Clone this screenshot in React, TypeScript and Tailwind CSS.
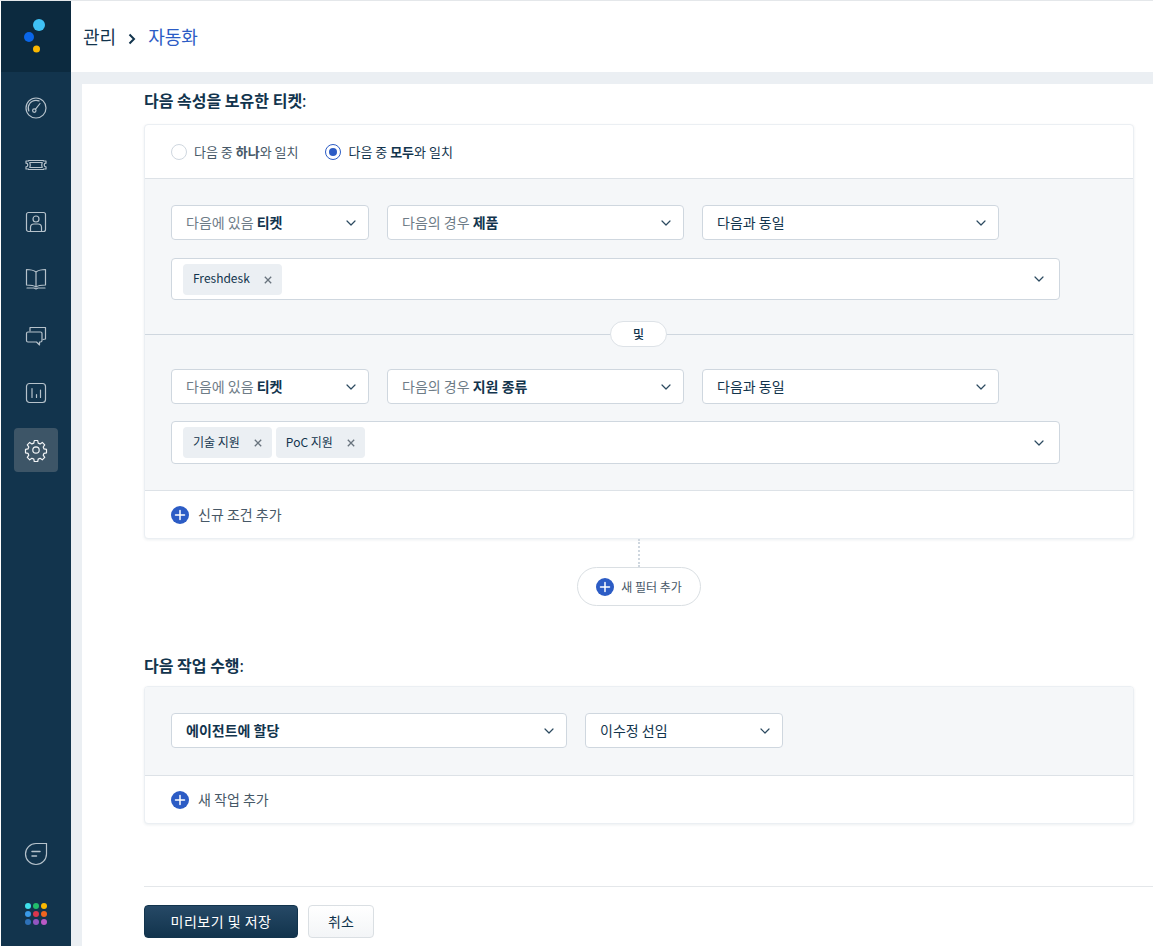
import React from "react";

const Chevron = () => (
  <svg width="10" height="6" viewBox="0 0 10 6" fill="none" className="shrink-0">
    <path d="M1 1l4 4 4-4" stroke="#2c4a60" strokeWidth="1.2" strokeLinecap="round" strokeLinejoin="round" />
  </svg>
);

const Plus = ({ size = 18 }: { size?: number }) => (
  <svg width={size} height={size} viewBox="0 0 18 18" className="shrink-0">
    <circle cx="9" cy="9" r="9" fill="#2c5cc5" />
    <path d="M9 4.5v9M4.5 9h9" stroke="#fff" strokeWidth="1.5" strokeLinecap="round" />
  </svg>
);

const X = () => (
  <svg width="8" height="8" viewBox="0 0 8 8" fill="none" className="shrink-0">
    <path d="M.8.8l6.4 6.4M7.2.8L.8 7.2" stroke="#68737d" strokeWidth="1.3" />
  </svg>
);

function Select({ w, muted, bold, plain }: { w: string; muted?: string; bold?: string; plain?: string }) {
  return (
    <div className={`${w} h-[35px] shrink-0 bg-white border border-[#cfd7df] rounded-[4px] flex items-center justify-between pl-[14px] pr-[12px] text-[14px]`}>
      <span className="whitespace-nowrap">
        {muted && <span className="text-[#6e7c87]">{muted} </span>}
        {bold && <span className="font-bold text-[#12344d]">{bold}</span>}
        {plain && <span className="text-[#12344d]">{plain}</span>}
      </span>
      <Chevron />
    </div>
  );
}

function Tag({ label, gap }: { label: string; gap: string }) {
  return (
    <div className="h-[31px] bg-[#ebeff3] rounded-[4px] pl-[10px] pr-[10px] flex items-center text-[12px] text-[#12344d]">
      <span className="-mt-[2px] whitespace-nowrap">{label}</span>
      <span className={`${gap} mt-[1px]`}><X /></span>
    </div>
  );
}

function TagBox({ children, h }: { children: React.ReactNode; h: string }) {
  return (
    <div className={`w-[889px] ${h} bg-white border border-[#cfd7df] rounded-[4px] flex items-center justify-between pl-[11px] pr-[15px]`}>
      <div className="flex gap-[4px]">{children}</div>
      <Chevron />
    </div>
  );
}

const NavIcon = ({ children, active }: { children: React.ReactNode; active?: boolean }) => (
  <div className={`w-[44px] h-[44px] rounded-[4px] flex items-center justify-center ${active ? "bg-[#3d5567]" : ""}`}>
    <svg width="24" height="24" viewBox="0 0 24 24" fill="none" stroke={active ? "#f2f4f6" : "#b6c2cb"} strokeWidth="1.2" strokeLinecap="round" strokeLinejoin="round">
      {children}
    </svg>
  </div>
);

function Sidebar() {
  return (
    <aside className="w-[70px] shrink-0 ml-[1px] bg-[#12344d] flex flex-col items-center">
      <div className="w-full h-[71px] bg-[#0c2a3f] flex items-center justify-center">
        <svg width="26" height="38" viewBox="0 0 26 38">
          <circle cx="16" cy="7" r="6" fill="#3fc1f5" />
          <circle cx="6" cy="19" r="5" fill="#0a66e8" />
          <circle cx="13.5" cy="31" r="3.5" fill="#fbb800" />
        </svg>
      </div>
      <div className="flex flex-col items-center gap-[13px] mt-[14px]">
        <NavIcon>
          <circle cx="12" cy="12" r="10" />
          <circle cx="12" cy="12" r="7.2" strokeWidth="0.8" opacity="0" />
          <path d="M4.8 15A7.8 7.8 0 0 1 12 4.3a7.8 7.8 0 0 1 3 .6" />
          <circle cx="10.3" cy="14.6" r="1.7" />
          <path d="M11.4 13.3L16 7.5" />
        </NavIcon>
        <NavIcon>
          <path d="M2 8h2.5V7.5a1 1 0 0 0 0 0H19.5V8H22v2.2a1.8 1.8 0 0 0 0 3.6V16h-2.5v.5H4.5V16H2v-2.2a1.8 1.8 0 0 0 0-3.6z" />
          <path d="M4.5 9.5h15v5h-15z" opacity="0" />
          <path d="M5.8 9.5c.6 1.5.6 3.5 0 5M18.2 9.5c-.6 1.5-.6 3.5 0 5M5.8 9.5h12.4M5.8 14.5h12.4" />
        </NavIcon>
        <NavIcon>
          <rect x="2.5" y="2.5" width="19" height="19" rx="2" />
          <circle cx="12" cy="9" r="3" />
          <path d="M6.5 21v-3.5a3.5 3.5 0 0 1 3.5-3.5h4a3.5 3.5 0 0 1 3.5 3.5V21" />
        </NavIcon>
        <NavIcon>
          <path d="M12 5c-2-1.5-5-2.5-9.5-2.5V18c4.5 0 7.5.5 9.5 2 2-1.5 5-2 9.500-2V2.500C17 2.500 14 3.500 12 5zM12 5v15" />
          <path d="M3 21h7l2 1 2-1h7" />
        </NavIcon>
        <NavIcon>
          <path d="M6 7V3.500h15.500V15l-2.500.5" />
          <path d="M4 8h12.500a1.500 1.500 0 0 1 1.500 1.500v7a1.500 1.500 0 0 1-1.500 1.500H15.500v3l-3-3H4a1.500 1.500 0 0 1-1.500-1.500v-7A1.500 1.500 0 0 1 4 8z" />
        </NavIcon>
        <NavIcon>
          <rect x="2.500" y="2.500" width="19" height="19" rx="3" />
          <path d="M8 7.500v9M12.500 13.500v3M16.500 9v7.500" />
        </NavIcon>
        <NavIcon active>
          <path d="M12 8.800a3.200 3.200 0 1 0 0 6.400 3.200 3.200 0 0 0 0-6.400z" />
          <path d="M10.300 2.500h3.400l.5 2.600 1.900.8 2.200-1.500 2.400 2.400-1.500 2.200.8 1.900 2.500.5v3.400l-2.500.5-.8 1.900 1.500 2.200-2.400 2.400-2.200-1.500-1.900.8-.5 2.500h-3.400l-.5-2.500-1.900-.8-2.200 1.500-2.400-2.400 1.500-2.200-.8-1.900-2.500-.5v-3.400l2.500-.5.800-1.900-1.500-2.200 2.400-2.400 2.200 1.500 1.900-.8z" />
        </NavIcon>
      </div>
      <div className="mt-auto flex flex-col items-center">
        <svg width="24" height="24" viewBox="0 0 24 24" fill="none" stroke="#b6c2cb" strokeWidth="1.2" strokeLinecap="round">
          <path d="M12 1.500h10.500V12A10.500 10.500 0 1 1 12 1.500z" />
          <path d="M8 9.500h8M8 14h4.500" strokeWidth="1.500" />
        </svg>
        <svg width="22" height="22" viewBox="0 0 22 22" className="mt-[37px] mb-[21px]">
          {[
            ["#3fe0ec", "#22bd6b", "#fbb800"],
            ["#3a9ae8", "#d9364d", "#f0651f"],
            ["#2e71b8", "#9255c2", "#b959c6"],
          ].flatMap((row, r) =>
            row.map((c, i) => <circle key={`${r}${i}`} cx={3 + i * 8} cy={3 + r * 8} r="3" fill={c} />)
          )}
        </svg>
      </div>
    </aside>
  );
}

export default function App() {
  return (
    <div className="w-[1160px] h-[946px] overflow-hidden bg-white font-['Noto_Sans_CJK_KR','Noto_Sans',sans-serif] text-[#12344d]">
      <div className="w-[1153px] h-[946px] flex border-t border-[#e4e7ea]">
        <Sidebar />
        <div className="flex-1 min-w-0 flex flex-col">
          <header className="h-[71px] shrink-0 flex items-center pl-[12px] text-[18px] bg-white">
            <span>관리</span>
            <svg width="8" height="12" viewBox="0 0 8 12" fill="none" className="ml-[12px] mr-[12px] mt-[5px]">
              <path d="M1.500 1.500L6 6l-4.500 4.500" stroke="#12344d" strokeWidth="2" />
            </svg>
            <span className="text-[#2c5cc5]">자동화</span>
          </header>
          <div className="flex-1 min-h-0 bg-[#ebeff3] pt-[12px] pl-[11px]">
            <main className="h-full bg-white pl-[62px] flex flex-col">
              <h2 className="h-[40px] shrink-0 flex items-center text-[16px] font-bold leading-none -mb-[0px]">
                <span className="pb-[8px]">다음 속성을 보유한 티켓<span className="font-normal">:</span></span>
              </h2>
              <section className="w-[990px] shrink-0 bg-white border border-[#ebeff3] rounded-[4px] shadow-[0_1px_3px_rgba(18,52,77,0.08)] overflow-hidden">
                <div className="h-[53px] flex items-center pl-[26px] text-[13px]">
                  <span className="w-[16px] h-[16px] rounded-full border border-[#cfd7df] bg-white" />
                  <span className="ml-[7px] text-[#475867]">다음 중 <b className="font-semibold">하나</b>와 일치</span>
                  <span className="ml-[27px] w-[16px] h-[16px] rounded-full border border-[#2c5cc5] bg-white flex items-center justify-center">
                    <span className="w-[8px] h-[8px] rounded-full bg-[#2c5cc5]" />
                  </span>
                  <span className="ml-[7px] text-[#12344d]">다음 중 <b className="font-semibold">모두</b>와 일치</span>
                </div>
                <div className="h-[313px] bg-[#f5f7f9] border-y border-[#dde2e7] flex flex-col">
                  <div className="flex gap-[18px] pl-[26px] pt-[26px]">
                    <Select w="w-[198px]" muted="다음에 있음" bold="티켓" />
                    <Select w="w-[297px]" muted="다음의 경우" bold="제품" />
                    <Select w="w-[297px]" plain="다음과 동일" />
                  </div>
                  <div className="pl-[26px] mt-[18px]">
                    <TagBox h="h-[42px]">
                      <Tag label="Freshdesk" gap="ml-[14px]" />
                    </TagBox>
                  </div>
                  <div className="relative h-[1px] bg-[#cfd7df] mt-[34px]">
                    <span className="absolute left-[465px] -top-[13px] w-[57px] h-[26px] rounded-full bg-white border border-[#dde2e7] flex items-center justify-center text-[12px] font-medium">및</span>
                  </div>
                  <div className="flex gap-[18px] pl-[26px] pt-[34px]">
                    <Select w="w-[198px]" muted="다음에 있음" bold="티켓" />
                    <Select w="w-[297px]" muted="다음의 경우" bold="지원 종류" />
                    <Select w="w-[297px]" plain="다음과 동일" />
                  </div>
                  <div className="pl-[26px] mt-[17px]">
                    <TagBox h="h-[43px]">
                      <Tag label="기술 지원" gap="ml-[14px]" />
                      <Tag label="PoC 지원" gap="ml-[14px]" />
                    </TagBox>
                  </div>
                </div>
                <div className="h-[47px] flex items-center pl-[26px] text-[14px] text-[#475867]">
                  <Plus />
                  <span className="ml-[9px]">신규 조건 추가</span>
                </div>
              </section>
              <div className="w-[990px] shrink-0 flex flex-col items-center">
                <div className="h-[28px] border-l-2 border-dotted border-[#cfd7df]" />
                <div className="w-[124px] h-[39px] rounded-full border border-[#dadfe3] bg-white flex items-center justify-center text-[12px] text-[#475867]">
                  <Plus />
                  <span className="ml-[7px]">새 필터 추가</span>
                </div>
              </div>
              <h2 className="mt-[48px] h-[22px] shrink-0 flex items-center text-[16px] font-bold leading-none">
                다음 작업 수행<span className="font-normal">:</span>
              </h2>
              <section className="mt-[10px] w-[990px] shrink-0 bg-white border border-[#ebeff3] rounded-[4px] shadow-[0_1px_3px_rgba(18,52,77,0.08)] overflow-hidden">
                <div className="h-[89px] bg-[#f5f7f9] border-b border-[#dde2e7] flex gap-[18px] pl-[26px] pt-[26px]">
                  <Select w="w-[396px]" bold="에이전트에 할당" />
                  <Select w="w-[198px]" plain="이수정 선임" />
                </div>
                <div className="h-[47px] flex items-center pl-[26px] text-[14px] text-[#475867]">
                  <Plus />
                  <span className="ml-[9px]">새 작업 추가</span>
                </div>
              </section>
              <footer className="mt-[62px] border-t border-[#e4e7ea] pt-[18px] flex gap-[10px]">
                <button className="w-[154px] h-[33px] rounded-[4px] border border-[#12344d] bg-gradient-to-b from-[#264966] to-[#12344d] text-white text-[14px] tracking-[0.5px]">미리보기 및 저장</button>
                <button className="w-[66px] h-[33px] rounded-[4px] border border-[#dadfe3] bg-gradient-to-b from-white to-[#f3f5f7] text-[#12344d] text-[14px]">취소</button>
              </footer>
            </main>
          </div>
        </div>
      </div>
    </div>
  );
}
